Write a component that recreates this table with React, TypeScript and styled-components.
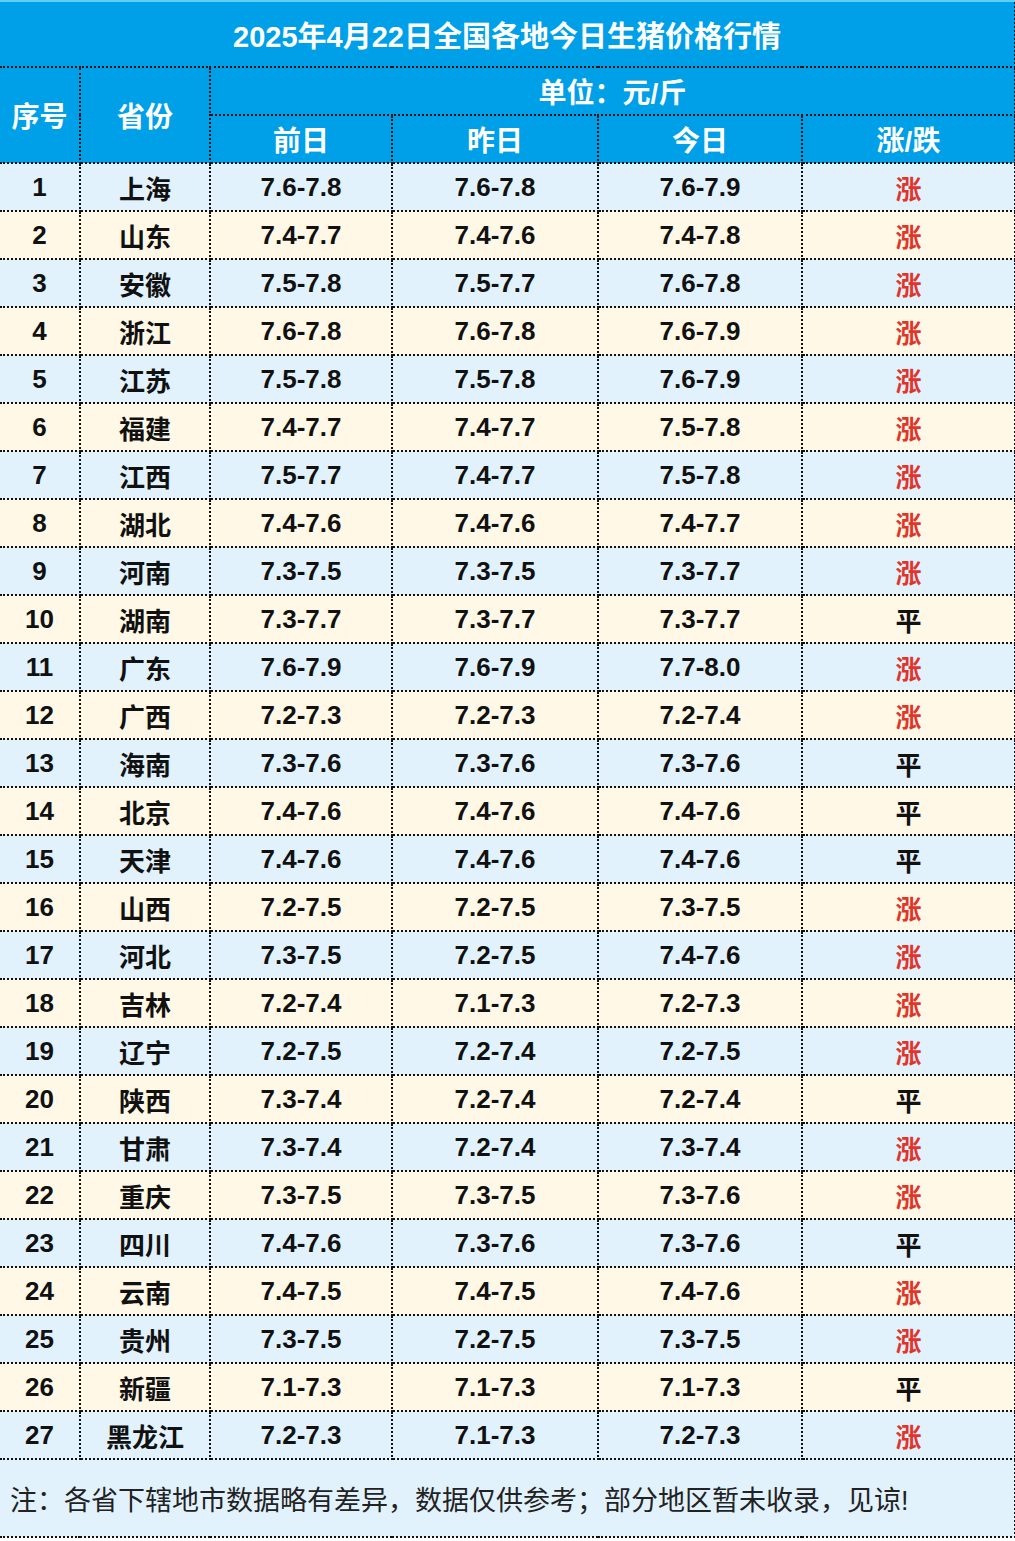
import React from "react";
import styled, { createGlobalStyle } from "styled-components";

interface PriceRow {
  province: string;
  before: string;
  yesterday: string;
  today: string;
  trend: "涨" | "平" | "跌";
}

const rows: PriceRow[] = [
  { province: "上海", before: "7.6-7.8", yesterday: "7.6-7.8", today: "7.6-7.9", trend: "涨" },
  { province: "山东", before: "7.4-7.7", yesterday: "7.4-7.6", today: "7.4-7.8", trend: "涨" },
  { province: "安徽", before: "7.5-7.8", yesterday: "7.5-7.7", today: "7.6-7.8", trend: "涨" },
  { province: "浙江", before: "7.6-7.8", yesterday: "7.6-7.8", today: "7.6-7.9", trend: "涨" },
  { province: "江苏", before: "7.5-7.8", yesterday: "7.5-7.8", today: "7.6-7.9", trend: "涨" },
  { province: "福建", before: "7.4-7.7", yesterday: "7.4-7.7", today: "7.5-7.8", trend: "涨" },
  { province: "江西", before: "7.5-7.7", yesterday: "7.4-7.7", today: "7.5-7.8", trend: "涨" },
  { province: "湖北", before: "7.4-7.6", yesterday: "7.4-7.6", today: "7.4-7.7", trend: "涨" },
  { province: "河南", before: "7.3-7.5", yesterday: "7.3-7.5", today: "7.3-7.7", trend: "涨" },
  { province: "湖南", before: "7.3-7.7", yesterday: "7.3-7.7", today: "7.3-7.7", trend: "平" },
  { province: "广东", before: "7.6-7.9", yesterday: "7.6-7.9", today: "7.7-8.0", trend: "涨" },
  { province: "广西", before: "7.2-7.3", yesterday: "7.2-7.3", today: "7.2-7.4", trend: "涨" },
  { province: "海南", before: "7.3-7.6", yesterday: "7.3-7.6", today: "7.3-7.6", trend: "平" },
  { province: "北京", before: "7.4-7.6", yesterday: "7.4-7.6", today: "7.4-7.6", trend: "平" },
  { province: "天津", before: "7.4-7.6", yesterday: "7.4-7.6", today: "7.4-7.6", trend: "平" },
  { province: "山西", before: "7.2-7.5", yesterday: "7.2-7.5", today: "7.3-7.5", trend: "涨" },
  { province: "河北", before: "7.3-7.5", yesterday: "7.2-7.5", today: "7.4-7.6", trend: "涨" },
  { province: "吉林", before: "7.2-7.4", yesterday: "7.1-7.3", today: "7.2-7.3", trend: "涨" },
  { province: "辽宁", before: "7.2-7.5", yesterday: "7.2-7.4", today: "7.2-7.5", trend: "涨" },
  { province: "陕西", before: "7.3-7.4", yesterday: "7.2-7.4", today: "7.2-7.4", trend: "平" },
  { province: "甘肃", before: "7.3-7.4", yesterday: "7.2-7.4", today: "7.3-7.4", trend: "涨" },
  { province: "重庆", before: "7.3-7.5", yesterday: "7.3-7.5", today: "7.3-7.6", trend: "涨" },
  { province: "四川", before: "7.4-7.6", yesterday: "7.3-7.6", today: "7.3-7.6", trend: "平" },
  { province: "云南", before: "7.4-7.5", yesterday: "7.4-7.5", today: "7.4-7.6", trend: "涨" },
  { province: "贵州", before: "7.3-7.5", yesterday: "7.2-7.5", today: "7.3-7.5", trend: "涨" },
  { province: "新疆", before: "7.1-7.3", yesterday: "7.1-7.3", today: "7.1-7.3", trend: "平" },
  { province: "黑龙江", before: "7.2-7.3", yesterday: "7.1-7.3", today: "7.2-7.3", trend: "涨" },
];

const columnWidths = [80, 130, 182, 206, 204, 213];

const GlobalStyle = createGlobalStyle`
  html, body {
    margin: 0;
    padding: 0;
    background: #ffffff;
  }
  body {
    font-family: "Liberation Sans", "Noto Sans CJK SC", sans-serif;
  }
`;

const Table = styled.table`
  width: 1015px;
  border-collapse: collapse;
  table-layout: fixed;
  font-family: "Liberation Sans", "Noto Sans CJK SC", sans-serif;
`;

const TitleCell = styled.th`
  height: 64px;
  padding: 0;
  background: #00a0e9;
  color: #ffffff;
  font-size: 29px;
  font-weight: 700;
  text-align: center;
  border-top: 2px solid #5fd0f5;
  border-bottom: 2px dotted #111;
  border-right: 2px dotted #111;
`;

const HeadCell = styled.th`
  height: 46px;
  padding: 0;
  background: #00a0e9;
  color: #ffffff;
  font-size: 28px;
  font-weight: 700;
  text-align: center;
  vertical-align: middle;
  border: 2px dotted #111;
  &:first-child {
    border-left: none;
  }
`;

const Row = styled.tr<{ $striped: boolean }>`
  background: ${(p) => (p.$striped ? "#fff8e6" : "#e2f2fd")};
`;

const Cell = styled.td`
  height: 46px;
  padding: 0;
  font-size: 26px;
  font-weight: 700;
  color: #111111;
  text-align: center;
  vertical-align: middle;
  border: 2px dotted #111;
  &:first-child {
    border-left: none;
  }
`;

const TrendCell = styled(Cell)<{ $up: boolean }>`
  color: ${(p) => (p.$up ? "#e0352b" : "#111111")};
`;

const NoteCell = styled.td`
  height: 76px;
  padding: 0 0 0 10px;
  background: #e2f2fd;
  color: #222222;
  font-size: 27px;
  font-weight: 400;
  text-align: left;
  vertical-align: middle;
  border-top: 2px dotted #111;
  border-bottom: 2px dotted #111;
  border-right: 2px dotted #111;
`;

const App: React.FC = () => (
  <>
    <GlobalStyle />
    <Table>
      <colgroup>
        {columnWidths.map((w, i) => (
          <col key={i} style={{ width: w }} />
        ))}
      </colgroup>
      <thead>
        <tr>
          <TitleCell colSpan={6}>2025年4月22日全国各地今日生猪价格行情</TitleCell>
        </tr>
        <tr>
          <HeadCell rowSpan={2}>序号</HeadCell>
          <HeadCell rowSpan={2}>省份</HeadCell>
          <HeadCell colSpan={4}>单位：元/斤</HeadCell>
        </tr>
        <tr>
          <HeadCell>前日</HeadCell>
          <HeadCell>昨日</HeadCell>
          <HeadCell>今日</HeadCell>
          <HeadCell>涨/跌</HeadCell>
        </tr>
      </thead>
      <tbody>
        {rows.map((row, i) => (
          <Row key={row.province} $striped={i % 2 === 1}>
            <Cell>{i + 1}</Cell>
            <Cell>{row.province}</Cell>
            <Cell>{row.before}</Cell>
            <Cell>{row.yesterday}</Cell>
            <Cell>{row.today}</Cell>
            <TrendCell $up={row.trend === "涨"}>{row.trend}</TrendCell>
          </Row>
        ))}
        <tr>
          <NoteCell colSpan={6}>
            注：各省下辖地市数据略有差异，数据仅供参考；部分地区暂未收录，见谅!
          </NoteCell>
        </tr>
      </tbody>
    </Table>
  </>
);

export default App;
